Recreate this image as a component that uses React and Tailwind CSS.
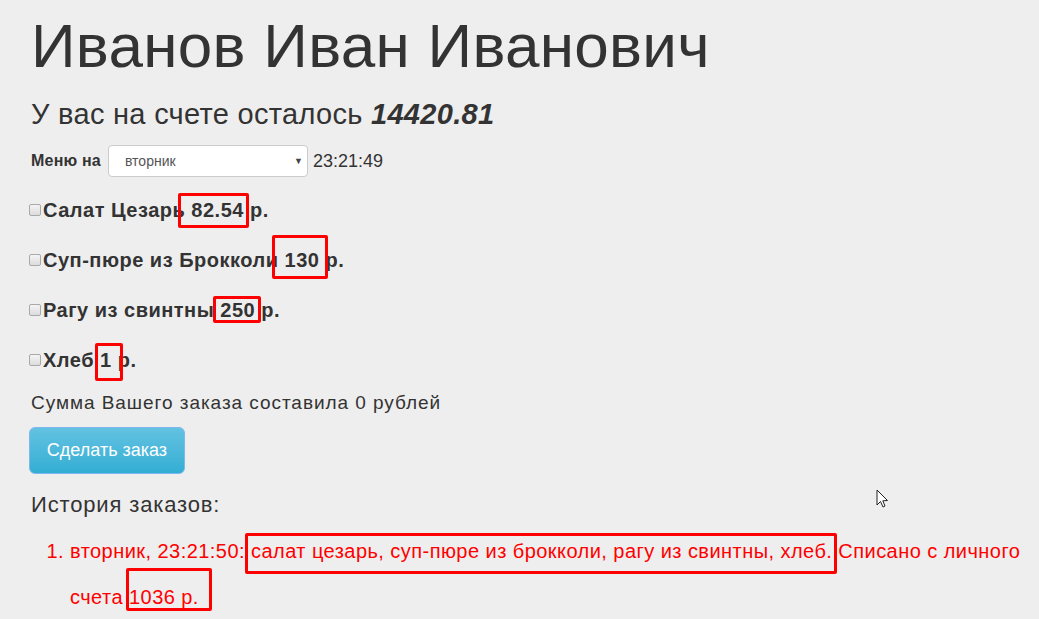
import { useState } from "react";

const items = [
  { name: "Салат Цезарь", price: "82.54", box: "-left-[13px] -right-[5px] -top-[6px] -bottom-[7px]" },
  { name: "Суп-пюре из Брокколи", price: "130", box: "-left-[13px] -right-[9px] -top-[14px] -bottom-[8px]" },
  { name: "Рагу из свинтны", price: "250", box: "-left-[7px] -right-[6px] -top-[3px] -bottom-[2px]" },
  { name: "Хлеб", price: "1", box: "-left-[5px] -right-[11px] -top-[6px] -bottom-[10px]" },
];

function RedBox({ className }) {
  // annotation frame drawn over the screenshot
  return (
    <span
      className={
        "pointer-events-none absolute border-[3px] border-[#ff0000] rounded-[2px] " +
        className
      }
    />
  );
}

export default function App() {
  const [day, setDay] = useState("вторник");

  return (
    <div
      className="relative min-h-[619px] bg-[#eeeeee] text-[#333333] pl-[31px] pr-[10px] pt-[11px]"
      style={{ fontFamily: '"Liberation Sans", Arial, sans-serif' }}
    >
      {/* Name */}
      <h1 className="text-[62px] leading-[69px] font-normal tracking-[0.3px]">
        Иванов Иван Иванович
      </h1>

      {/* Balance */}
      <h3 className="mt-[18px] text-[29px] leading-[33px] tracking-[0.3px]">
        У вас на счете осталось <b className="italic font-bold">14420.81</b>
      </h3>

      {/* Day selector */}
      <div className="mt-[14px] flex items-center h-[32px]">
        <span className="font-bold text-[16px] tracking-[0.2px]">Меню на</span>
        <div className="relative ml-[7px]">
          <select
            value={day}
            onChange={(e) => setDay(e.target.value)}
            className="appearance-none w-[200px] h-[32px] bg-white border border-[#cccccc] rounded-[4px] pl-[16px] text-[14px] text-[#555555] outline-none"
          >
            <option value="понедельник">понедельник</option>
            <option value="вторник">вторник</option>
            <option value="среда">среда</option>
          </select>
          <span className="pointer-events-none absolute right-[5px] top-[10px] text-[9px] text-[#444]">
            ▼
          </span>
        </div>
        <span className="ml-[5px] text-[18px]">23:21:49</span>
      </div>

      {/* Menu items */}
      <div className="mt-[8px] flex flex-col">
        {items.map((item) => (
          <label key={item.name} className="h-[50px] flex items-center -ml-[2px]">
            <input
              type="checkbox"
              className="appearance-none w-[12px] h-[12px] border border-[#a9a9a9] rounded-[2px] bg-gradient-to-b from-[#f4f4f4] to-[#dcdcdc] mr-[2px]"
            />
            <span className="text-[20px] font-bold tracking-[0.5px]">
              {item.name}{" "}
              <span className="relative">
                {item.price}
                <RedBox className={item.box} />
              </span>{" "}
              р.
            </span>
          </label>
        ))}
      </div>

      {/* Total */}
      <p className="mt-[5px] text-[19px] leading-[26px] tracking-[0.95px]">
        Сумма Вашего заказа составила 0 рублей
      </p>

      <button className="mt-[11px] -ml-[2px] w-[156px] h-[47px] rounded-[6px] border border-[#7fb8ef] bg-gradient-to-b from-[#62c2e2] to-[#31aed3] text-white text-[18px]">
        Сделать заказ
      </button>

      {/* History */}
      <h4 className="mt-[16px] text-[22px] leading-[30px] tracking-[0.85px]">История заказов:</h4>

      <ol className="mt-[8px] list-decimal pl-[39px] text-[#ff0000] text-[20px] leading-[46px] tracking-[0.45px]">
        <li>
          вторник, 23:21:50:{" "}
          <span className="relative">
            салат цезарь, суп-пюре из брокколи, рагу из свинтны, хлеб.
            <RedBox className="-left-[6px] -right-[5px] -top-[7px] -bottom-[12px]" />
          </span>{" "}
          Списано с личного счета{" "}
          <span className="relative">
            1036 р.
            <RedBox className="-left-[3px] -right-[13px] -top-[18px] -bottom-[3px]" />
          </span>
        </li>
      </ol>

      {/* mouse pointer */}
      <svg
        className="absolute left-[876px] top-[489px]"
        width="14"
        height="20"
        viewBox="0 0 14 20"
      >
        <path
          d="M1 1 L1 16 L4.5 12.5 L7 18 L9 17 L6.8 11.8 L11.5 11.5 Z"
          fill="white"
          stroke="#222"
          strokeWidth="1"
          strokeLinejoin="round"
        />
      </svg>
    </div>
  );
}
